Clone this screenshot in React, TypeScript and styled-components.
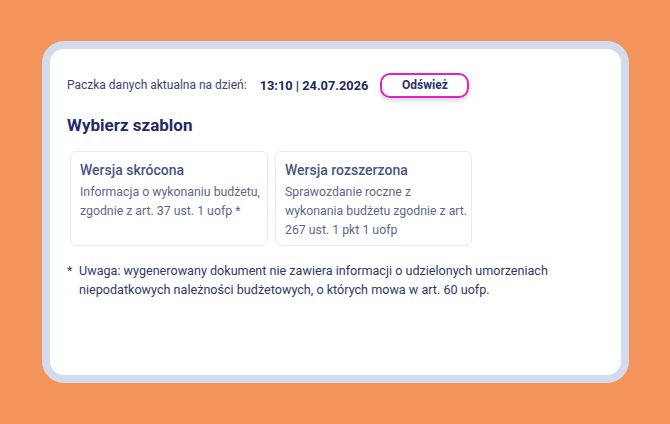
import React from "react";
import styled, { createGlobalStyle } from "styled-components";

const GlobalStyle = createGlobalStyle`
  html, body {
    margin: 0;
    padding: 0;
    background: #f5955e;
    font-family: Roboto, "Noto Sans", sans-serif;
  }
`;

const Page = styled.div`
  width: 670px;
  height: 424px;
  padding: 41px 41px 0 42px;
  box-sizing: border-box;
`;

const Frame = styled.div`
  width: 587px;
  height: 342px;
  padding: 8px;
  box-sizing: border-box;
  background: #d3dcee;
  border-radius: 22px;
`;

const Panel = styled.div`
  height: 100%;
  background: #fff;
  border-radius: 14px;
  padding: 24px 17px;
  box-sizing: border-box;
`;

const HeaderRow = styled.div`
  display: flex;
  align-items: center;
  height: 24px;
`;

const Label = styled.span`
  font-size: 12px;
  color: #3a4570;
`;

const Time = styled.span`
  margin-left: 13px;
  font-size: 12.8px;
  font-weight: 700;
  color: #1e2a5a;
`;

const RefreshButton = styled.button`
  margin-left: 12px;
  width: 89px;
  height: 25px;
  border: 2px solid #e61fbf;
  border-radius: 10px;
  background: #fff;
  box-shadow: 0 3px 4px rgba(40, 50, 90, 0.18);
  font-family: inherit;
  font-size: 12px;
  font-weight: 700;
  color: #27336a;
  cursor: pointer;
`;

const Title = styled.h2`
  margin: 16px 0 0;
  font-size: 17px;
  line-height: 24px;
  font-weight: 700;
  color: #1f2a66;
`;

const Cards = styled.div`
  display: flex;
  gap: 7px;
  margin: 14px 0 0 3px;
`;

const Card = styled.div<{ $w: number }>`
  width: ${(p) => p.$w}px;
  height: 95px;
  box-sizing: border-box;
  border: 1px solid #e6eaf4;
  border-radius: 6px;
  padding: 8px 3px 8px 9px;
`;

const CardTitle = styled.div`
  font-size: 14px;
  line-height: 20px;
  font-weight: 500;
  color: #4a5680;
  margin-bottom: 3px;
`;

const CardText = styled.div`
  font-size: 12.3px;
  line-height: 19px;
  color: #5e6889;
`;

const Note = styled.div`
  display: flex;
  margin-top: 15px;
  font-size: 12.6px;
  line-height: 19px;
  color: #2f3a66;
`;

const Star = styled.span`
  width: 12px;
  flex-shrink: 0;
`;

export default function App() {
  return (
    <>
      <GlobalStyle />
      <Page>
        <Frame>
          <Panel>
            <HeaderRow>
              <Label>Paczka danych aktualna na dzień:</Label>
              <Time>13:10 | 24.07.2026</Time>
              <RefreshButton>Odśwież</RefreshButton>
            </HeaderRow>
            <Title>Wybierz szablon</Title>
            <Cards>
              <Card $w={198}>
                <CardTitle>Wersja skrócona</CardTitle>
                <CardText>
                  Informacja o wykonaniu budżetu, zgodnie z art. 37 ust. 1 uofp *
                </CardText>
              </Card>
              <Card $w={197}>
                <CardTitle>Wersja rozszerzona</CardTitle>
                <CardText>
                  Sprawozdanie roczne z wykonania budżetu zgodnie z art. 267 ust. 1 pkt 1 uofp
                </CardText>
              </Card>
            </Cards>
            <Note>
              <Star>*</Star>
              <span>
                Uwaga: wygenerowany dokument nie zawiera informacji o udzielonych umorzeniach
                niepodatkowych należności budżetowych, o których mowa w art. 60 uofp.
              </span>
            </Note>
          </Panel>
        </Frame>
      </Page>
    </>
  );
}
